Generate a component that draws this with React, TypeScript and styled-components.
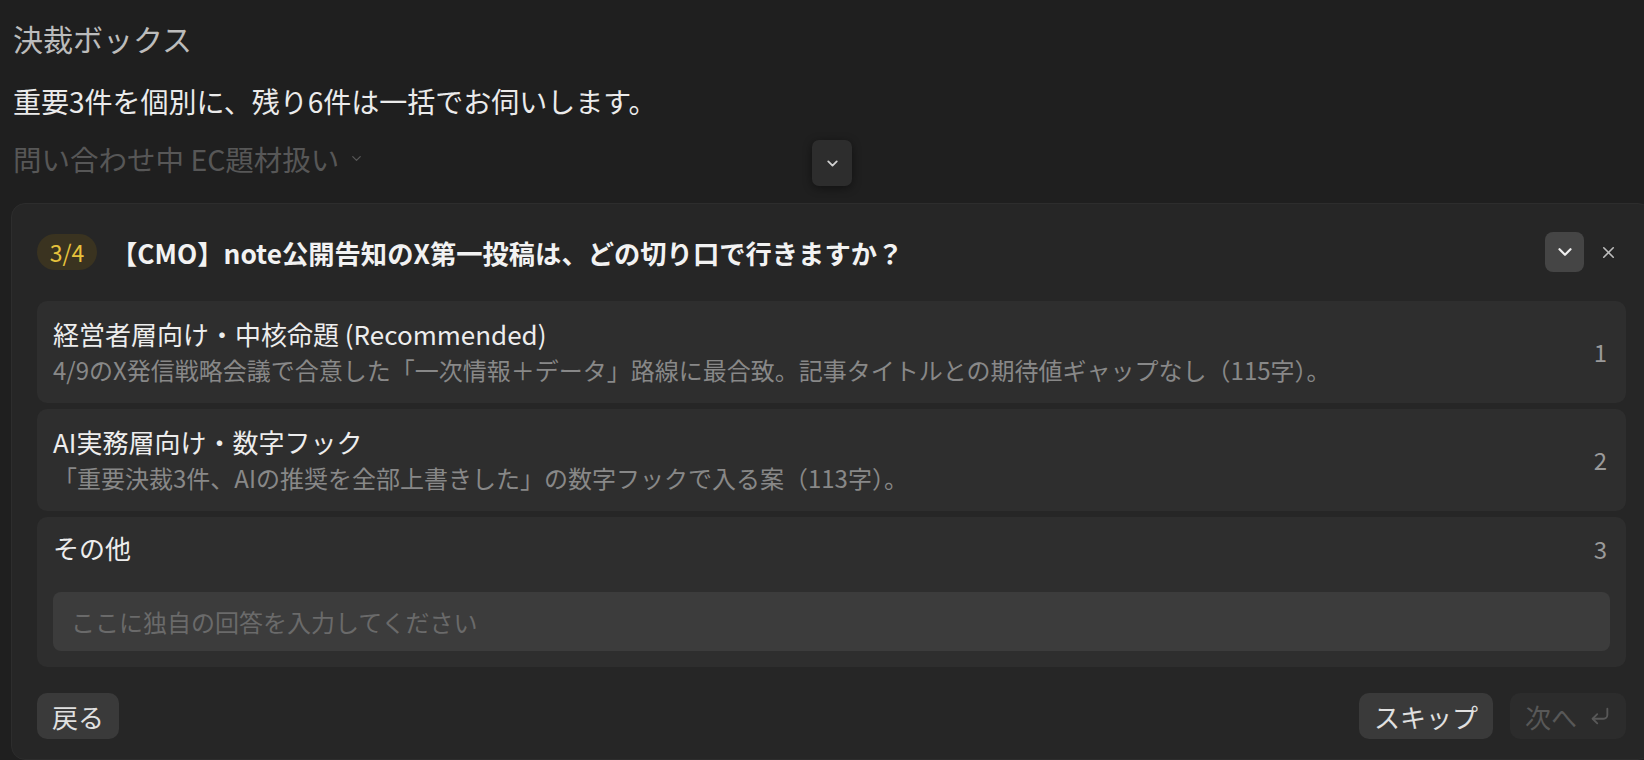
import styled, { createGlobalStyle } from 'styled-components';
import { ChevronDown, X, CornerDownLeft } from 'lucide-react';

const GlobalStyle = createGlobalStyle`
  html, body {
    margin: 0;
    padding: 0;
    background: #1f1f1f;
    overflow: hidden;
  }
  body {
    font-family: "Noto Sans CJK JP", "Noto Sans", sans-serif;
    color: #e8e8e8;
  }
  * {
    box-sizing: border-box;
  }
`;

const Page = styled.main`
  width: 1644px;
  height: 760px;
  display: flex;
  flex-direction: column;
`;

const Intro = styled.section`
  display: flex;
  flex-direction: column;
  padding: 18px 0 0 13px;
  .intro {
    &__heading {
      font-size: 30px;
      line-height: 40px;
      color: #bcbcbc;
    }
    &__body {
      margin-top: 23px;
      font-size: 28px;
      line-height: 40px;
      color: #ebebeb;
    }
  }
`;

const StatusRow = styled.div`
  position: relative;
  display: flex;
  align-items: center;
  gap: 10px;
  margin-top: 17px;
  height: 40px;
  font-size: 28.5px;
  color: #575757;
`;

const ScrollButton = styled.button`
  position: absolute;
  left: 799px;
  top: 2px;
  width: 40px;
  height: 46px;
  display: flex;
  align-items: center;
  justify-content: center;
  border: none;
  border-radius: 7px;
  background: #2d2d2d;
  color: #d0d0d0;
  box-shadow: 0 2px 10px rgba(0, 0, 0, 0.45);
  padding: 0;
`;

const Panel = styled.section`
  margin: 25px -8px 0 11px;
  padding: 28px 25px 20px;
  flex: 1;
  display: flex;
  flex-direction: column;
  background: #262626;
  border: 1px solid #2d2d2d;
  border-radius: 14px;
`;

const QuestionHeader = styled.header`
  display: flex;
  align-items: center;
  height: 40px;
  gap: 14px;
`;

const StepBadge = styled.span`
  display: inline-flex;
  align-items: center;
  justify-content: center;
  width: 60px;
  height: 36px;
  border-radius: 18px;
  background: #3a3320;
  color: #e6c23c;
  font-size: 23px;
`;

const QuestionTitle = styled.h2`
  flex: 1;
  margin: 0;
  font-size: 26.3px;
  font-weight: 700;
  color: #f2f2f2;
  white-space: nowrap;
`;

const HeaderActions = styled.div`
  display: flex;
  align-items: center;
  gap: 10px;
  margin-right: 4px;
`;

const IconButton = styled.button<{ $filled?: boolean }>`
  display: flex;
  align-items: center;
  justify-content: center;
  width: ${(p) => (p.$filled ? '39px' : '28px')};
  height: ${(p) => (p.$filled ? '40px' : '28px')};
  padding: 0;
  border: none;
  border-radius: 8px;
  background: ${(p) => (p.$filled ? '#454545' : 'transparent')};
  color: ${(p) => (p.$filled ? '#f0f0f0' : '#bdbdbd')};
`;

const Options = styled.div`
  display: flex;
  flex-direction: column;
  gap: 6px;
  margin-top: 29px;
`;

const OptionCard = styled.div<{ $compact?: boolean }>`
  display: flex;
  flex-direction: column;
  padding: ${(p) => (p.$compact ? '13px 16px 16px' : '15px 16px 16px')};
  border-radius: 10px;
  background: #2e2e2e;
`;

const OptionMain = styled.div`
  display: flex;
  align-items: center;
  gap: 20px;
`;

const OptionText = styled.div`
  flex: 1;
  display: flex;
  flex-direction: column;
`;

const OptionTitle = styled.span`
  font-size: 26px;
  line-height: 36px;
  color: #ededed;
`;

const OptionDesc = styled.span`
  font-size: 24px;
  line-height: 35px;
  color: #888888;
  white-space: nowrap;
`;

const OptionKey = styled.span`
  font-size: 24px;
  color: #9a9a9a;
  padding-right: 3px;
`;

const AnswerInput = styled.input`
  margin-top: 26px;
  height: 59px;
  width: 100%;
  padding: 0 18px;
  border: none;
  outline: none;
  border-radius: 8px;
  background: #3c3c3c;
  color: #e8e8e8;
  font-family: inherit;
  font-size: 24px;
  &::placeholder {
    color: #6a6a6a;
  }
`;

const Footer = styled.footer`
  display: flex;
  align-items: center;
  gap: 17px;
  margin-top: 26px;
  .footer__spacer {
    flex: 1;
  }
`;

const FooterButton = styled.button<{ $disabled?: boolean }>`
  display: inline-flex;
  align-items: center;
  gap: 12px;
  height: 46px;
  padding: 0 15px;
  border: none;
  border-radius: 10px;
  background: ${(p) => (p.$disabled ? '#2c2c2c' : '#3a3a3a')};
  color: ${(p) => (p.$disabled ? '#585858' : '#e0e0e0')};
  font-family: inherit;
  font-size: 26px;
`;

interface IOption {
  title: string;
  desc?: string;
}

const options: IOption[] = [
  {
    title: '経営者層向け・中核命題 (Recommended)',
    desc: '4/9のX発信戦略会議で合意した「一次情報＋データ」路線に最合致。記事タイトルとの期待値ギャップなし（115字）。',
  },
  {
    title: 'AI実務層向け・数字フック',
    desc: '「重要決裁3件、AIの推奨を全部上書きした」の数字フックで入る案（113字）。',
  },
];

const App = () => {
  return (
    <Page>
      <GlobalStyle />
      <Intro>
        <span className="intro__heading">決裁ボックス</span>
        <span className="intro__body">重要3件を個別に、残り6件は一括でお伺いします。</span>
        <StatusRow>
          <span>問い合わせ中 EC題材扱い</span>
          <ChevronDown size={15} strokeWidth={2} />
          <ScrollButton>
            <ChevronDown size={17} strokeWidth={2.6} />
          </ScrollButton>
        </StatusRow>
      </Intro>
      <Panel>
        <QuestionHeader>
          <StepBadge>3/4</StepBadge>
          <QuestionTitle>【CMO】note公開告知のX第一投稿は、どの切り口で行きますか？</QuestionTitle>
          <HeaderActions>
            <IconButton $filled>
              <ChevronDown size={22} strokeWidth={2.4} />
            </IconButton>
            <IconButton>
              <X size={19} strokeWidth={2} />
            </IconButton>
          </HeaderActions>
        </QuestionHeader>
        <Options>
          {options.map((o, i) => (
            <OptionCard key={o.title}>
              <OptionMain>
                <OptionText>
                  <OptionTitle>{o.title}</OptionTitle>
                  <OptionDesc>{o.desc}</OptionDesc>
                </OptionText>
                <OptionKey>{i + 1}</OptionKey>
              </OptionMain>
            </OptionCard>
          ))}
          <OptionCard $compact>
            <OptionMain>
              <OptionText>
                <OptionTitle>その他</OptionTitle>
              </OptionText>
              <OptionKey>3</OptionKey>
            </OptionMain>
            <AnswerInput placeholder="ここに独自の回答を入力してください" />
          </OptionCard>
        </Options>
        <Footer>
          <FooterButton>戻る</FooterButton>
          <span className="footer__spacer" />
          <FooterButton>スキップ</FooterButton>
          <FooterButton $disabled>
            次へ
            <CornerDownLeft size={22} strokeWidth={2} />
          </FooterButton>
        </Footer>
      </Panel>
    </Page>
  );
};

export default App;
